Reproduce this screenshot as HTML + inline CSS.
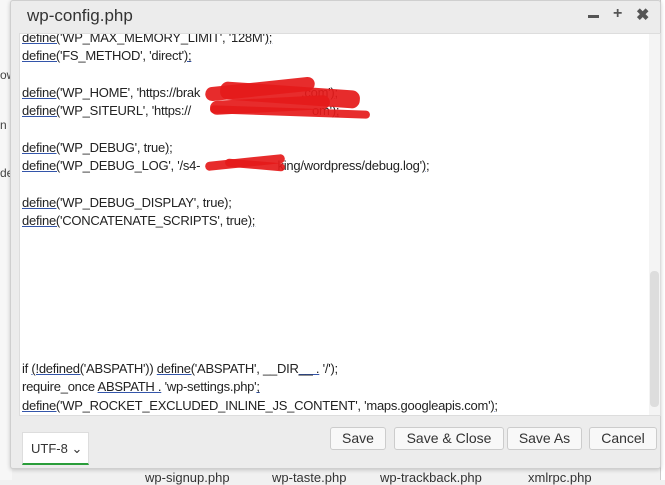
<!DOCTYPE html>
<html><head><meta charset="utf-8"><style>
*{margin:0;padding:0;box-sizing:border-box}
body{width:665px;height:480px;overflow:hidden;background:#f1f1f1;font-family:"Liberation Sans",Arial,sans-serif;position:relative}
.bgl{position:absolute;left:0;top:0;width:12px;height:480px;background:#f7f7f7}
.bgr{position:absolute;left:660px;top:0;width:5px;height:480px;background:#fff;border-left:1px solid #ccc}
.dlg{position:absolute;left:10px;top:0;width:651px;height:469px;background:#ececec;border:1px solid #cfcfcf;border-radius:3px;box-shadow:0 1px 4px rgba(0,0,0,.2)}
.title{position:absolute;left:16px;top:5px;font-size:17px;color:#333}
.ctl{position:absolute;top:5px;font-size:16px;font-weight:bold;color:#555}
.ed{position:absolute;left:8px;top:32px;width:642px;height:383px;background:#fff;border:1px solid #ddd;overflow:hidden}
.code{position:absolute;left:2px;font-size:13px;color:#222;letter-spacing:-0.25px;line-height:18.3px;white-space:pre}
u{text-decoration:underline;text-decoration-color:#3355aa}
.red{position:absolute;background:#e51a1a;border-radius:8px;opacity:.92}
.sb{position:absolute;right:0;top:0;width:11px;height:383px;background:#f4f4f4}
.th{position:absolute;right:1px;top:237px;width:9px;height:136px;background:#ddd;border-radius:4px}
.btn{position:absolute;top:426px;height:23px;border:1px solid #ccc;border-radius:3px;background:#f8f8f8;font-size:14px;color:#333;text-align:center;line-height:21px}
.enc{position:absolute;left:11px;top:431px;width:67px;height:33px;background:#fff;border:1px solid #ddd;border-bottom:2px solid #2a9d3a;font-size:13px;color:#333;padding:8px 0 0 8px}
.bot{position:absolute;top:470px;font-size:13px;color:#333}
</style></head><body>
<div class="bgl"></div><div class="bgr"></div>
<div style="position:absolute;left:0;top:68px;font-size:12px;color:#444">ow</div>
<div style="position:absolute;left:0;top:118px;font-size:12px;color:#444">n</div>
<div style="position:absolute;left:0;top:166px;font-size:12px;color:#444">de</div>
<div class="bot" style="left:145px">wp-signup.php</div>
<div class="bot" style="left:272px">wp-taste.php</div>
<div class="bot" style="left:380px">wp-trackback.php</div>
<div class="bot" style="left:528px">xmlrpc.php</div>
<div class="dlg">
<div class="title">wp-config.php</div>
<div style="position:absolute;left:577px;top:14px;width:11px;height:3px;background:#555"></div>
<div class="ctl" style="left:602px;top:4px">+</div>
<div class="ctl" style="left:625px;top:4px">&#10006;</div>
<div class="ed">
<div class="code" style="top:-5px"><u>define(</u>'WP_MAX_MEMORY_LIMIT', '128M'<u>);</u>
<u>define(</u>'FS_METHOD', 'direct'<u>);</u>

<u>define(</u>'WP_HOME', 'https://brak                              .com'<u>);</u>
<u>define(</u>'WP_SITEURL', 'https://                                    om'<u>);</u>

<u>define(</u>'WP_DEBUG', true<u>);</u>
<u>define(</u>'WP_DEBUG_LOG', '/s4-                       king/wordpress/debug.log'<u>);</u>

<u>define(</u>'WP_DEBUG_DISPLAY', true<u>);</u>
<u>define(</u>'CONCATENATE_SCRIPTS', true<u>);</u></div>
<div class="code" style="top:326px">if <u>(!defined(</u>'ABSPATH')) <u>define(</u>'ABSPATH', __DIR<u>__ .</u> '/');
require_once <u>ABSPATH .</u> 'wp-settings.php'<u>;</u>
<u>define(</u>'WP_ROCKET_EXCLUDED_INLINE_JS_CONTENT', 'maps.googleapis.com'<u>);</u></div>
<div class="red" style="left:185px;top:48px;width:110px;height:14px;transform:rotate(-6deg)"></div>
<div class="red" style="left:200px;top:52px;width:140px;height:18px;transform:rotate(4deg)"></div>
<div class="red" style="left:190px;top:64px;width:120px;height:14px;transform:rotate(-3deg)"></div>
<div class="red" style="left:190px;top:74px;width:160px;height:8px;transform:rotate(2deg)"></div>
<div class="red" style="left:185px;top:124px;width:80px;height:9px;transform:rotate(-6deg)"></div>
<div class="red" style="left:205px;top:127px;width:60px;height:8px;transform:rotate(5deg)"></div>
<div class="sb"><div class="th"></div></div>
</div>
<div class="enc">UTF-8 &#8964;</div>
<div class="btn" style="left:319px;width:56px">Save</div>
<div class="btn" style="left:383px;width:110px">Save &amp; Close</div>
<div class="btn" style="left:496px;width:75px">Save As</div>
<div class="btn" style="left:578px;width:68px">Cancel</div>
</div>
</body></html>
